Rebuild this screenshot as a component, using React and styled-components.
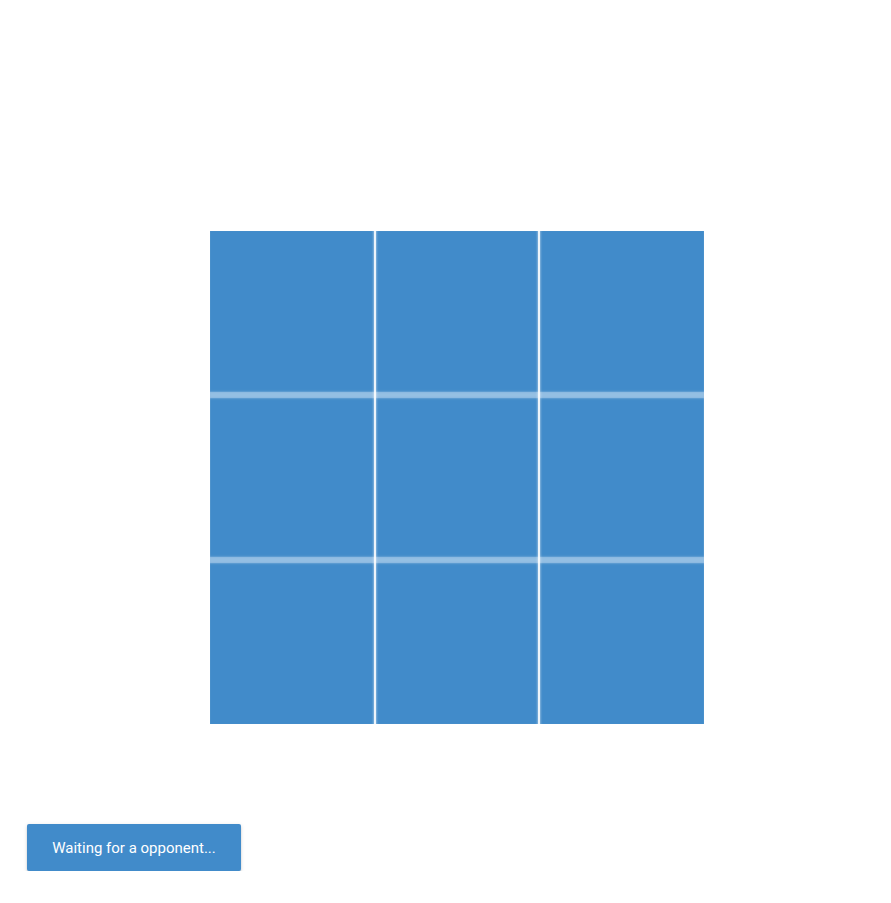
import React from 'react'
import styled, { createGlobalStyle } from 'styled-components'

const GlobalStyle = createGlobalStyle`
  html, body {
    margin: 0;
    padding: 0;
    background: #ffffff;
    font-family: Roboto, "Noto Sans", sans-serif;
  }
`

const Page = styled.div`
  display: flex;
  flex-direction: column;
  align-items: flex-start;
  padding: 231px 0 0 0;
`

const Board = styled.div`
  display: grid;
  grid-template-columns: repeat(3, 1fr);
  grid-template-rows: repeat(3, 1fr);
  width: 494px;
  height: 493px;
  margin-left: 210px;
  background: #418bca;
`

const edgeShadows = ({ $row, $col }) => {
  const list = []
  if ($col < 2) list.push('inset -1px 0 0 0 rgba(255,255,255,0.85)', 'inset -3px 0 2px -1px rgba(255,255,255,0.35)')
  if ($col > 0) list.push('inset 1px 0 0 0 rgba(255,255,255,0.85)', 'inset 3px 0 2px -1px rgba(255,255,255,0.35)')
  if ($row < 2) list.push('inset 0 -3px 1px 0 rgba(170,204,234,0.7)', 'inset 0 -5px 2px -1px rgba(140,185,226,0.4)')
  if ($row > 0) list.push('inset 0 3px 1px 0 rgba(170,204,234,0.7)', 'inset 0 5px 2px -1px rgba(140,185,226,0.4)')
  return list.length ? list.join(', ') : 'none'
}

const Cell = styled.div`
  background: #418bca;
  box-shadow: ${edgeShadows};
  cursor: pointer;
`

const Footer = styled.div`
  padding: 100px 0 0 27px;
`

const StatusButton = styled.button`
  height: 47px;
  width: 214px;
  padding: 0;
  border: none;
  border-radius: 2px;
  background: #418bca;
  color: #ffffff;
  font-family: Roboto, "Noto Sans", sans-serif;
  font-size: 15px;
  letter-spacing: 0;
  box-shadow: 0 2px 2px 0 rgba(0,0,0,0.14), 0 1px 4px 0 rgba(0,0,0,0.12), 0 3px 1px -2px rgba(0,0,0,0.2);
  cursor: pointer;
`

export default function App() {
  const cells = []
  for (let r = 0; r < 3; r++) {
    for (let c = 0; c < 3; c++) {
      cells.push(<Cell key={`${r}-${c}`} $row={r} $col={c} />)
    }
  }

  return (
    <>
      <GlobalStyle />
      <Page>
        <Board>{cells}</Board>
        <Footer>
          <StatusButton>Waiting for a opponent...</StatusButton>
        </Footer>
      </Page>
    </>
  )
}
